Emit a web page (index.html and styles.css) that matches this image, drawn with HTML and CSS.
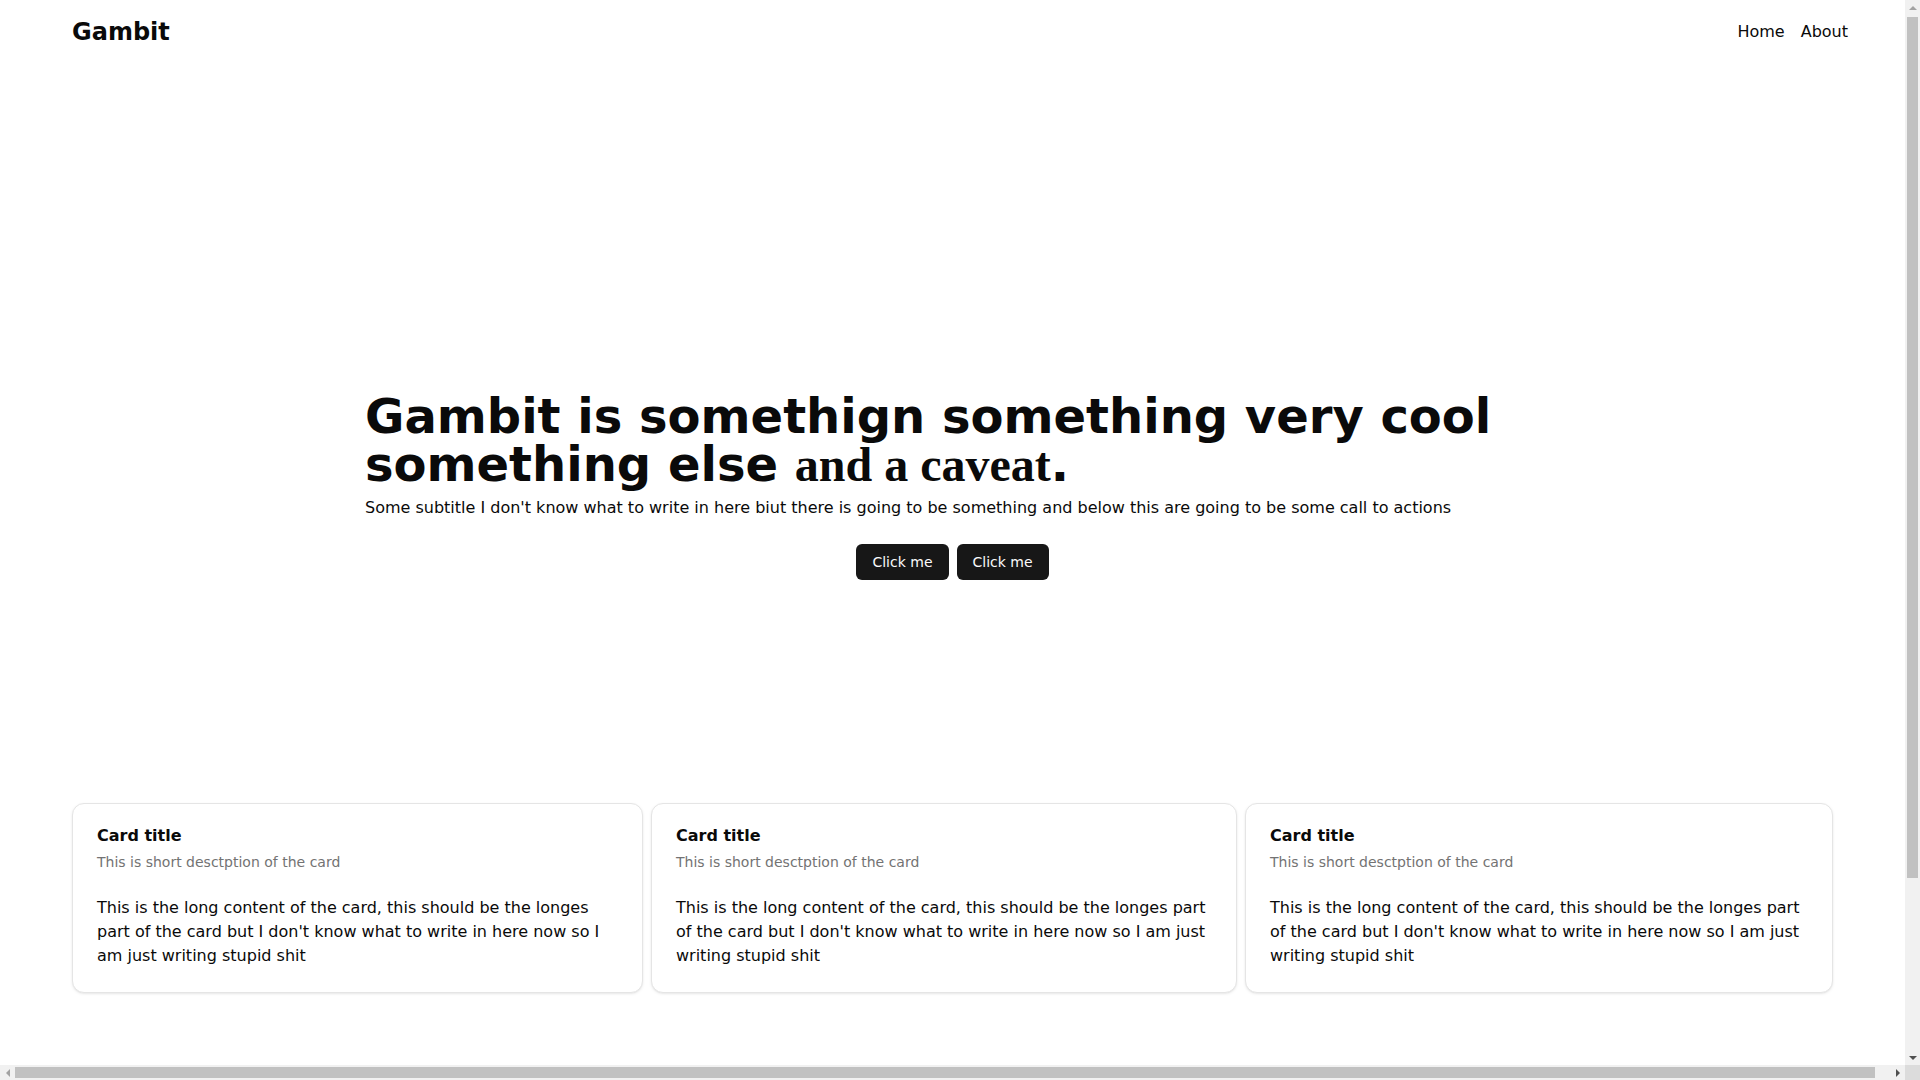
FILE: index.html
```html
<!DOCTYPE html>
<html lang="en">
<head>
<meta charset="utf-8">
<title>Gambit</title>
<link rel="stylesheet" href="styles.css">
</head>
<body>
<header class="site-header">
  <a class="brand" href="#">Gambit</a>
  <nav class="nav">
    <a class="nav-link" href="#">Home</a>
    <a class="nav-link" href="#">About</a>
  </nav>
</header>
<main class="main">
  <section class="hero">
    <h1 class="hero-title">Gambit is somethign something very cool something else <span class="caveat">and a caveat</span>.</h1>
    <p class="hero-subtitle">Some subtitle I don't know what to write in here biut there is going to be something and below this are going to be some call to actions</p>
    <div class="hero-actions">
      <button class="btn">Click me</button>
      <button class="btn">Click me</button>
    </div>
  </section>
  <section class="cards">
    <div class="card card-a">
      <div class="card-header">
        <h3 class="card-title">Card title</h3>
        <p class="card-desc">This is short desctption of the card</p>
      </div>
      <div class="card-content">This is the long content of the card, this should be the longes part of the card but I don't know what to write in here now so I am just writing stupid shit</div>
    </div>
    <div class="card">
      <div class="card-header">
        <h3 class="card-title">Card title</h3>
        <p class="card-desc">This is short desctption of the card</p>
      </div>
      <div class="card-content">This is the long content of the card, this should be the longes part of the card but I don't know what to write in here now so I am just writing stupid shit</div>
    </div>
    <div class="card">
      <div class="card-header">
        <h3 class="card-title">Card title</h3>
        <p class="card-desc">This is short desctption of the card</p>
      </div>
      <div class="card-content">This is the long content of the card, this should be the longes part of the card but I don't know what to write in here now so I am just writing stupid shit</div>
    </div>
  </section>
</main>

<div class="scrollbar-v" aria-hidden="true">
  <span class="sb-arrow arrow-up"></span>
  <span class="sb-thumb-v"></span>
  <span class="sb-fill"></span>
  <span class="sb-arrow arrow-down"></span>
</div>
<div class="scrollbar-h" aria-hidden="true">
  <span class="sb-arrow arrow-left"></span>
  <span class="sb-thumb-h"></span>
  <span class="sb-fill"></span>
  <span class="sb-arrow arrow-right"></span>
</div>
<div class="scrollbar-corner" aria-hidden="true"></div>
</body>
</html>
```

FILE: styles.css
```css
* {
  box-sizing: border-box;
}

html, body {
  margin: 0;
  padding: 0;
  background: #ffffff;
}

body {
  font-family: "DejaVu Sans", sans-serif;
  color: #0a0a0a;
  font-size: 16px;
  line-height: 24px;
  overflow: hidden;
}

a {
  color: inherit;
  text-decoration: none;
}

.site-header {
  width: 100vw;
  height: 64px;
  padding: 0 72px;
  display: flex;
  align-items: center;
  justify-content: space-between;
}

.brand {
  font-size: 24px;
  font-weight: 700;
  line-height: 30px;
}

.nav {
  display: flex;
  gap: 16px;
}

.nav-link {
  font-size: 16px;
  line-height: 24px;
}

/* leaves room for the scrollbar gutter, as in the reference */
.main {
  margin-right: 15px;
  padding-bottom: 40px;
}

.hero {
  max-width: 1175px;
  margin: 0 auto;
  padding-top: 328px;
}

.hero-title {
  margin: 0;
  font-size: 48px;
  line-height: 1;
  font-weight: 700;
}

.caveat {
  font-family: "Liberation Serif", serif;
  font-weight: 700;
}

.hero-subtitle {
  margin: 7px 0 0;
  font-size: 16px;
  line-height: 24px;
}

.hero-actions {
  margin-top: 24px;
  display: flex;
  justify-content: center;
  gap: 8px;
}

.btn {
  height: 36px;
  padding: 0 16px;
  border: none;
  border-radius: 6px;
  background: #171717;
  color: #fafafa;
  font-family: "DejaVu Sans", sans-serif;
  font-size: 14px;
  line-height: 20px;
  cursor: pointer;
}

.cards {
  margin: 223px 72px 0;
  display: grid;
  grid-template-columns: 571px 586px 1fr;
  gap: 8px;
}

.card {
  border: 1px solid #e5e5e5;
  border-radius: 12px;
  background: #ffffff;
  box-shadow: 0 1px 3px rgba(0, 0, 0, 0.08), 0 1px 2px -1px rgba(0, 0, 0, 0.08);
}

.card-header {
  padding: 24px;
  display: flex;
  flex-direction: column;
  gap: 8px;
}

.card-title {
  margin: 0;
  font-size: 16px;
  line-height: 16px;
  font-weight: 700;
}

.card-desc {
  margin: 0;
  font-size: 14px;
  line-height: 20px;
  color: #737373;
}

.card-content {
  padding: 0 24px 24px;
  font-size: 16px;
  line-height: 24px;
}

/* browser scrollbars shown in the reference */
.scrollbar-v {
  position: fixed;
  top: 0;
  right: 0;
  width: 15px;
  height: 1065px;
  background: #f1f1f1;
  display: flex;
  flex-direction: column;
  align-items: center;
}

.scrollbar-h {
  position: fixed;
  left: 0;
  bottom: 0;
  width: 1905px;
  height: 15px;
  background: #f1f1f1;
  display: flex;
  flex-direction: row;
  align-items: center;
}

.scrollbar-corner {
  position: fixed;
  right: 0;
  bottom: 0;
  width: 15px;
  height: 15px;
  background: #dcdcdc;
}

.sb-arrow {
  width: 15px;
  height: 15px;
  flex: none;
  display: flex;
  align-items: center;
  justify-content: center;
}

.sb-arrow::before {
  content: "";
  width: 0;
  height: 0;
  border-style: solid;
}

.arrow-up::before {
  border-width: 0 4px 4px 4px;
  border-color: transparent transparent #a3a3a3 transparent;
}

.arrow-down::before {
  border-width: 4px 4px 0 4px;
  border-color: #505050 transparent transparent transparent;
}

.arrow-left::before {
  border-width: 4px 4px 4px 0;
  border-color: transparent #a3a3a3 transparent transparent;
}

.arrow-right::before {
  border-width: 4px 0 4px 4px;
  border-color: transparent transparent transparent #505050;
}

.sb-thumb-v {
  width: 11px;
  height: 861px;
  margin-top: 2px;
  background: #c1c1c1;
  flex: none;
}

.sb-thumb-h {
  width: 1860px;
  height: 11px;
  background: #c1c1c1;
  flex: none;
}

.sb-fill {
  flex: 1;
}
```
